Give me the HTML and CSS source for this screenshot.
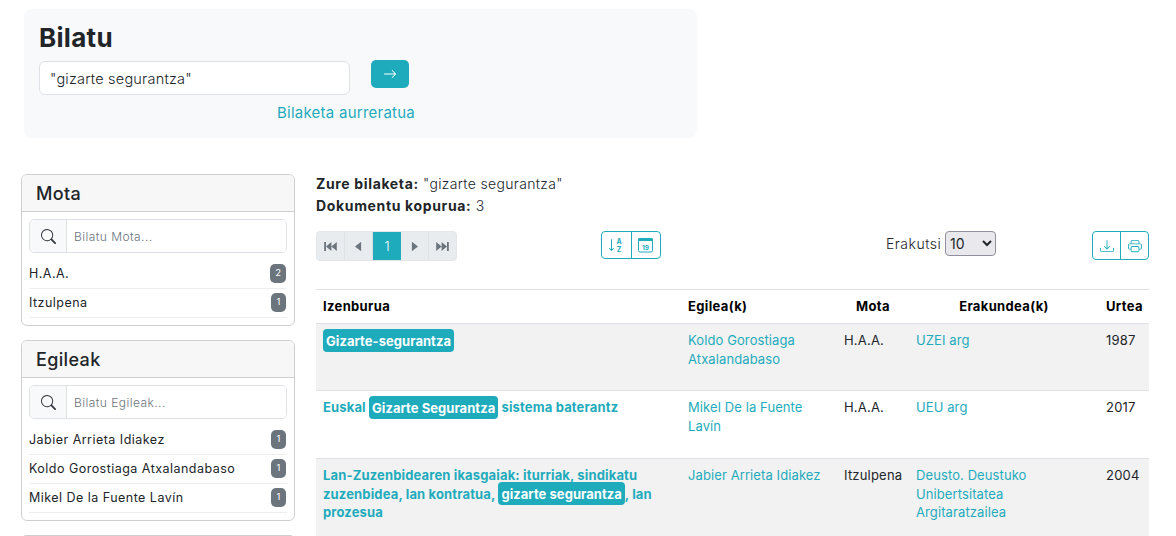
FILE: index.html
```html
<!DOCTYPE html>
<html lang="eu">
<head>
<meta charset="utf-8">
<title>Bilatu</title>
<link rel="stylesheet" href="styles.css">
</head>
<body>
<section class="search-panel">
  <h1>Bilatu</h1>
  <form class="search-row">
    <input class="search-input" type="text" value="&quot;gizarte segurantza&quot;">
    <button class="go" type="button"><svg width="14" height="14" viewBox="0 0 16 16" fill="#fff"><path d="M1 8a.5.5 0 0 1 .5-.5h11.793l-3.147-3.146a.5.5 0 0 1 .708-.708l4 4a.5.5 0 0 1 0 .708l-4 4a.5.5 0 0 1-.708-.708L13.293 8.5H1.5A.5.5 0 0 1 1 8z"/></svg></button>
  </form>
  <a class="advanced" href="#">Bilaketa aurreratua</a>
</section>
<div class="layout">
  <aside class="sidebar">
    <div class="facet">
      <h2>Mota</h2>
      <div class="facet-body">
        <div class="facet-search">
          <span class="facet-icon"><svg width="15" height="15" viewBox="0 0 16 16" fill="#343a40"><path d="M11.742 10.344a6.5 6.5 0 1 0-1.397 1.398h-.001c.03.04.062.078.098.115l3.85 3.85a1 1 0 0 0 1.415-1.414l-3.85-3.85a1.007 1.007 0 0 0-.115-.1zM12 6.5a5.5 5.5 0 1 1-11 0 5.5 5.5 0 0 1 11 0z"/></svg></span>
          <input type="text" placeholder="Bilatu Mota...">
        </div>
        <ul>
          <li>H.A.A.<span class="badge">2</span></li>
          <li>Itzulpena<span class="badge">1</span></li>
        </ul>
      </div>
    </div>
    <div class="facet">
      <h2>Egileak</h2>
      <div class="facet-body">
        <div class="facet-search">
          <span class="facet-icon"><svg width="15" height="15" viewBox="0 0 16 16" fill="#343a40"><path d="M11.742 10.344a6.5 6.5 0 1 0-1.397 1.398h-.001c.03.04.062.078.098.115l3.85 3.85a1 1 0 0 0 1.415-1.414l-3.85-3.85a1.007 1.007 0 0 0-.115-.1zM12 6.5a5.5 5.5 0 1 1-11 0 5.5 5.5 0 0 1 11 0z"/></svg></span>
          <input type="text" placeholder="Bilatu Egileak...">
        </div>
        <ul>
          <li>Jabier Arrieta Idiakez<span class="badge">1</span></li>
          <li>Koldo Gorostiaga Atxalandabaso<span class="badge">1</span></li>
          <li>Mikel De la Fuente Lavín<span class="badge">1</span></li>
        </ul>
      </div>
    </div>
    <div class="facet facet-stub"></div>
  </aside>
  <main class="results">
    <p class="summary"><b>Zure bilaketa:</b> "gizarte segurantza"</p>
    <p class="summary"><b>Dokumentu kopurua:</b> 3</p>
    <div class="toolbar">
      <nav class="pager">
        <a href="#"><svg width="13" height="9" viewBox="0 0 14 10" fill="#6c757d"><path d="M0 0h2v10H0zM2 5l6-5v10zM8 5l6-5v10z"/></svg></a>
        <a href="#"><svg width="7" height="11" viewBox="0 0 8 11" fill="#6c757d"><path d="M0 5.5 7 0v11z"/></svg></a>
        <a class="current" href="#">1</a>
        <a href="#"><svg width="7" height="11" viewBox="0 0 8 11" fill="#6c757d"><path d="M8 5.5 1 0v11z"/></svg></a>
        <a href="#"><svg width="13" height="9" viewBox="0 0 14 10" fill="#6c757d"><path d="M14 0h-2v10h2zM12 5 6 0v10zM6 5 0 0v10z"/></svg></a>
      </nav>
      <div class="btn-group sort-group">
        <a href="#"><svg width="16" height="16" viewBox="0 0 16 16" fill="#1eabbc"><path d="M4 2.5a.5.5 0 0 0-1 0v9.793l-1.146-1.147a.5.5 0 0 0-.708.708l2 2a.5.5 0 0 0 .708 0l2-2a.5.5 0 0 0-.708-.708L4 12.293V2.5z"/><text class="az" x="11" y="7">A</text><text class="az" x="11" y="14.5">Z</text></svg></a>
        <a href="#"><svg width="15" height="16" viewBox="0 0 15 16"><rect x=".5" y="1.5" width="14" height="13.5" rx="1.5" fill="none" stroke="#1eabbc"/><path d="M1 1h13l.5 .5V4H.5V1.5z" fill="#1eabbc"/><text class="cal" x="7.5" y="12.5">19</text></svg></a>
      </div>
      <label class="page-size">Erakutsi <select><option>10</option><option>25</option><option>50</option></select></label>
      <div class="btn-group export-group">
        <a href="#"><svg width="14" height="14" viewBox="0 0 16 16" fill="#1eabbc"><path d="M.5 9.9a.5.5 0 0 1 .5.5v2.5a1 1 0 0 0 1 1h12a1 1 0 0 0 1-1v-2.5a.5.5 0 0 1 1 0v2.5a2 2 0 0 1-2 2H2a2 2 0 0 1-2-2v-2.5a.5.5 0 0 1 .5-.5z"/><path d="M7.646 11.854a.5.5 0 0 0 .708 0l3-3a.5.5 0 0 0-.708-.708L8.5 10.293V1.5a.5.5 0 0 0-1 0v8.793L5.354 8.146a.5.5 0 1 0-.708.708l3 3z"/></svg></a>
        <a href="#"><svg width="14" height="14" viewBox="0 0 16 16" fill="#1eabbc"><path d="M2.5 8a.5.5 0 1 0 0-1 .5.5 0 0 0 0 1z"/><path d="M5 1a2 2 0 0 0-2 2v2H2a2 2 0 0 0-2 2v3a2 2 0 0 0 2 2h1v1a2 2 0 0 0 2 2h6a2 2 0 0 0 2-2v-1h1a2 2 0 0 0 2-2V7a2 2 0 0 0-2-2h-1V3a2 2 0 0 0-2-2H5zM4 3a1 1 0 0 1 1-1h6a1 1 0 0 1 1 1v2H4V3zm1 5a2 2 0 0 0-2 2v1H2a1 1 0 0 1-1-1V7a1 1 0 0 1 1-1h12a1 1 0 0 1 1 1v3a1 1 0 0 1-1 1h-1v-1a2 2 0 0 0-2-2H5zm7 2v3a1 1 0 0 1-1 1H5a1 1 0 0 1-1-1v-3a1 1 0 0 1 1-1h6a1 1 0 0 1 1 1z"/></svg></a>
      </div>
    </div>
    <table>
      <colgroup><col class="c-title"><col class="c-author"><col class="c-type"><col class="c-org"><col class="c-year"></colgroup>
      <thead>
        <tr><th>Izenburua</th><th>Egilea(k)</th><th class="center">Mota</th><th class="center">Erakundea(k)</th><th>Urtea</th></tr>
      </thead>
      <tbody>
        <tr class="r1"><td><a class="title" href="#"><mark>Gizarte-segurantza</mark></a></td><td><a href="#">Koldo Gorostiaga Atxalandabaso</a></td><td>H.A.A.</td><td><a href="#">UZEI arg</a></td><td>1987</td></tr>
        <tr class="r2"><td><a class="title" href="#">Euskal <mark>Gizarte Segurantza</mark> sistema baterantz</a></td><td><a href="#">Mikel De la Fuente Lavín</a></td><td>H.A.A.</td><td><a href="#">UEU arg</a></td><td>2017</td></tr>
        <tr class="r3"><td><a class="title" href="#">Lan-Zuzenbidearen ikasgaiak: iturriak, sindikatu zuzenbidea, lan kontratua, <mark>gizarte segurantza</mark>, lan prozesua</a></td><td><a href="#">Jabier Arrieta Idiakez</a></td><td>Itzulpena</td><td><a href="#">Deusto. Deustuko Unibertsitatea Argitaratzailea</a></td><td>2004</td></tr>
      </tbody>
    </table>
  </main>
</div>
</body>
</html>
```
FILE: styles.css
```css
* { box-sizing: border-box; }
html, body { margin: 0; height: 536px; overflow: hidden; }
body { font-family: Inter, "Liberation Sans", sans-serif; font-size: 13px; color: #212529; background: #fff; }
a { color: #1eabbc; text-decoration: none; }

.search-panel { width: 673px; height: 129px; margin: 9px 0 36px 24px; padding: 14px 15px 0; background: #f8f9fa; border-radius: 8px; display: flex; flex-direction: column; }
h1 { margin: 0; font-size: 26px; line-height: 30px; font-weight: 700; letter-spacing: .3px; }
.search-row { display: flex; align-items: flex-start; gap: 21px; margin-top: 7px; }
.search-input { width: 311px; height: 34px; margin-top: 1px; padding: 0 10px; border: 1px solid #dee2e6; border-radius: 6px; font: 300 14.5px Inter, sans-serif; letter-spacing: .2px; color: #212529; background: #fff; }
.go { width: 38px; height: 28px; border: 0; border-radius: 5px; background: #1eabbc; display: flex; align-items: center; justify-content: center; padding: 0; }
.advanced { align-self: center; margin: 8px 29px 0 0; font-size: 15px; font-weight: 400; line-height: 20px; letter-spacing: .25px; }

.layout { display: flex; align-items: flex-start; gap: 21px; padding-left: 21px; }
.sidebar { width: 274px; flex: none; display: flex; flex-direction: column; gap: 14px; }
.facet { border: 1px solid #cfcfcf; border-radius: 6px; background: #fff; }
.facet h2 { margin: 0; height: 37px; padding: 0 14px; font-size: 18px; font-weight: 500; line-height: 37px; letter-spacing: .35px; background: #f7f7f7; border-bottom: 1px solid #cfcfcf; border-radius: 5px 5px 0 0; }
.facet-body { padding: 7px 7px 7px; }
.facet-search { display: flex; height: 34px; border: 1px solid #dee2e6; border-radius: 5px; overflow: hidden; }
.facet-icon { width: 37px; flex: none; display: flex; align-items: center; justify-content: center; background: #f8f9fa; border-right: 1px solid #dee2e6; }
.facet-search input { flex: 1; min-width: 0; border: 0; padding: 0 7px; font: 300 12px Inter, sans-serif; letter-spacing: .45px; outline: 0; }
.facet-search input::placeholder { color: #6c757d; opacity: 1; }
.facet ul { list-style: none; margin: 7px 0 0; padding: 0; }
.facet li { height: 29px; display: flex; align-items: center; justify-content: space-between; padding: 0 1px 2px 0; border-bottom: 1px solid #eeeeee; font-size: 12.5px; letter-spacing: .47px; }
.badge { min-width: 15px; height: 19px; padding: 2px 5px 0; border-radius: 5px; background: #6c757d; color: #fff; font-size: 9.5px; line-height: 13px; letter-spacing: 0; text-align: center; }
.facet-stub { height: 10px; }

.results { width: 833px; flex: none; margin-top: -1px; }
.summary { margin: 0; font-size: 14px; font-weight: 300; line-height: 22px; letter-spacing: .33px; }
.summary b { font-weight: 700; letter-spacing: .65px; }
.toolbar { display: flex; align-items: flex-start; margin: 14px 0 28px; height: 30px; }
.pager { display: flex; height: 30px; width: 141px; border: 1px solid #e3e6e9; border-radius: 4px; background: #e9ecef; overflow: hidden; }
.pager a { flex: 1; display: flex; align-items: center; justify-content: center; border-right: 1px solid #dee2e6; }
.pager a:last-child { border-right: 0; }
.pager .current { background: #1eabbc; color: #fff; font-weight: 300; font-size: 13px; border-right: 0; }
.btn-group { display: flex; height: 29px; border: 1px solid #1eabbc; border-radius: 4px; }
.btn-group a { flex: 1; display: flex; align-items: center; justify-content: center; }
.btn-group a + a { border-left: 1px solid #1eabbc; }
.sort-group { width: 60px; margin-left: 144px; height: 28px; }
.export-group { width: 57px; margin-left: 96px; height: 29px; }
.page-size { width: 110px; margin-left: 225px; display: flex; align-items: center; justify-content: space-between; height: 25px; font-size: 14px; font-weight: 300; letter-spacing: .5px; }
.page-size select { width: 51px; height: 25px; padding: 0; font: 400 14px Inter, sans-serif; color: #212529; background-color: #e9e9ed; border: 1px solid #8f8f9d; border-radius: 4px; }
.az { font: 700 7px Inter, sans-serif; text-anchor: middle; }
.cal { font: 700 6.5px Inter, sans-serif; fill: #1eabbc; text-anchor: middle; }

table { width: 833px; table-layout: fixed; border-collapse: collapse; font-size: 13px; line-height: 18.7px; letter-spacing: .2px; }
.c-title { width: 365px; } .c-author { width: 156px; } .c-type { width: 72px; } .c-org { width: 190px; } .c-year { width: 50px; }
th { height: 34px; padding: 0 7px; text-align: left; font-size: 13px; font-weight: 700; letter-spacing: .35px; color: #000; border-top: 1px solid #dee2e6; border-bottom: 1px solid #dee2e6; }
th.center { text-align: center; }
td { padding: 7px; vertical-align: top; font-weight: 400; color: #212529; border-bottom: 1px solid #dee2e6; }
td a { font-weight: 400; letter-spacing: .1px; }
.r1 td, .r3 td { background: #f2f2f2; }
.r1 td { height: 67px; }
.r2 td { height: 68px; }
.r3 td { height: 80px; }
td a.title { font-weight: 700; letter-spacing: .15px; }
mark { background: #1eabbc; color: #fff; padding: 3.5px 3px; border-radius: 4px; letter-spacing: .05px; }
```
